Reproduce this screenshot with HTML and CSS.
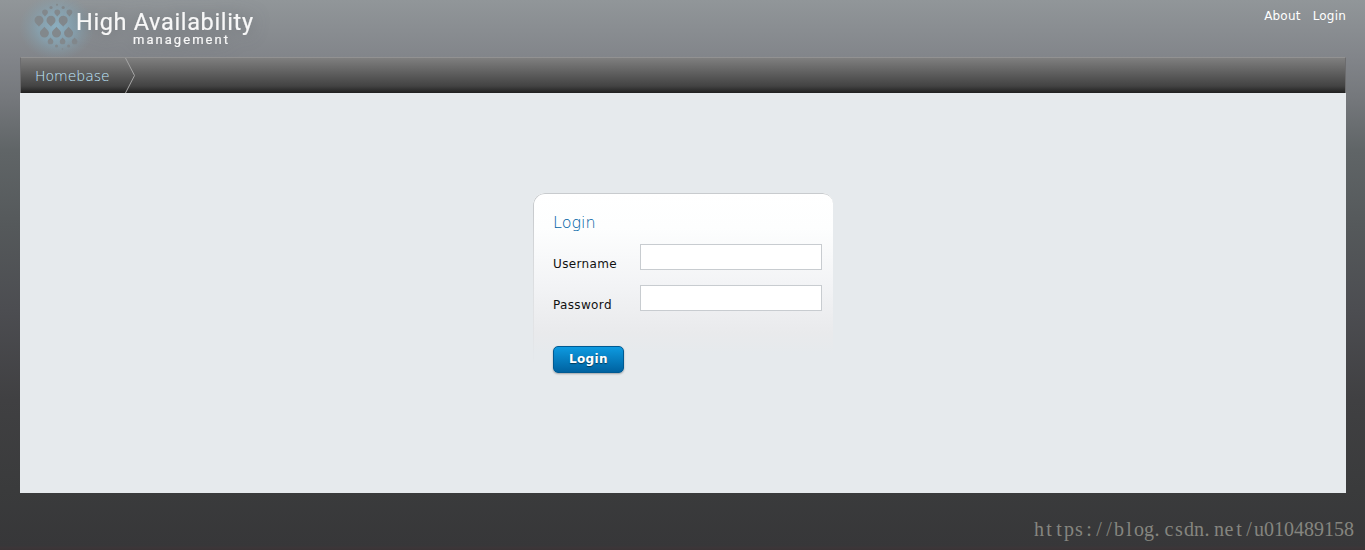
FILE: index.html
```html
<!DOCTYPE html>
<html lang="en">
<head>
    <meta charset="UTF-8">
    <title>High Availability management</title>
    <link rel="stylesheet" href="styles.css">
</head>
<body>
    <header class="header">
        <svg class="logo" width="260" height="57" viewBox="0 0 260 57">
            <defs>
                <radialGradient id="glow">
                    <stop offset="0" stop-color="#8bb0c2" stop-opacity="0.95"/>
                    <stop offset="0.5" stop-color="#86a6b6" stop-opacity="0.7"/>
                    <stop offset="1" stop-color="#849aa5" stop-opacity="0"/>
                </radialGradient>
                <path id="drop" d="M0 6C-1.5 3.8-4.5 2.6-4.5-.4A4.5 4.5 0 0 1 4.5-.4C4.5 2.6 1.5 3.8 0 6Z"/>
            </defs>
            <ellipse cx="37" cy="27" rx="38" ry="33" fill="url(#glow)"/>
            <g fill="#82888c">
                <circle cx="37" cy="4.7" r="1"/>
                <circle cx="31" cy="7.5" r="1.6"/>
                <circle cx="43.2" cy="7.5" r="1.6"/>
                <use href="#drop" transform="translate(25 12.6) scale(.65)"/>
                <use href="#drop" transform="translate(37.3 12.6) scale(.65)"/>
                <use href="#drop" transform="translate(49.4 12.6) scale(.65)"/>
                <use href="#drop" x="19" y="20.7"/>
                <use href="#drop" x="31" y="20.7"/>
                <use href="#drop" x="43.2" y="20.7"/>
                <use href="#drop" transform="translate(24.4 32.7) scale(1 -1)"/>
                <use href="#drop" transform="translate(36.5 32.7) scale(1 -1)"/>
                <use href="#drop" transform="translate(48.6 32.7) scale(1 -1)"/>
                <use href="#drop" transform="translate(30.5 41.2) scale(.63 -.63)"/>
                <use href="#drop" transform="translate(42.6 41.2) scale(.63 -.63)"/>
                <use href="#drop" transform="translate(54.6 41.2) scale(.63 -.63)"/>
                <circle cx="36.5" cy="46" r="1.5"/>
                <circle cx="48.6" cy="46" r="1.5"/>
                <circle cx="42.5" cy="49" r=".8"/>
            </g>
            <g class="logo-text">
                <text x="56" y="30" font-size="23.5" textLength="177">High Availability</text>
                <text x="113" y="44" font-size="13" textLength="95">management</text>
            </g>
        </svg>
        <nav class="links">
            <a>About</a>
            <a>Login</a>
        </nav>
    </header>

    <nav class="navbar">
        <a class="nav-item">Homebase</a>
        <svg class="nav-arrow" width="11" height="35" viewBox="0 0 11 35">
            <path d="M.5 0L9.5 17.5L.5 35" fill="none" stroke="#a6a6a6"/>
        </svg>
    </nav>

    <main class="content">
        <form class="login-box">
            <h2>Login</h2>
            <div class="row">
                <label for="username">Username</label>
                <input type="text" id="username">
            </div>
            <div class="row">
                <label for="password">Password</label>
                <input type="password" id="password">
            </div>
            <button type="button">Login</button>
        </form>
    </main>

    <footer class="footer">
        <!-- one 10px cell per character -->
        <svg class="url" width="322" height="26" viewBox="0 0 322 26">
            <text y="18" x="5 15 25 35 45 55 65 75 85 95 105 115 123 135 145 155 165 173 185 195 205 215 225 235 245 255 265 275 285 295 305 315">https://blog.csdn.net/u010489158</text>
        </svg>
    </footer>
</body>
</html>
```

FILE: styles.css
```css
* {
    box-sizing: border-box;
}
body {
    margin: 0;
    padding: 0 19px 0 20px;
    height: 550px;
    overflow: hidden;
    font-family: "DejaVu Sans", "Noto Sans", sans-serif;
    font-size: 12px;
    background: linear-gradient(#919699 0, #82858a 57px, #74777b 100px, #606567 150px, #55595b 225px, #4c4d51 310px, #404042 400px, #3a3b3c 490px, #373739 546px, #3c3639 547px, #3b3436 550px);
}
.header {
    display: flex;
    justify-content: space-between;
    height: 57px;
}
.logo {
    display: block;
}
.logo-text {
    font-family: Roboto, sans-serif;
    fill: #f7f7f7;
    stroke: #f7f7f7;
    stroke-width: 0.2px;
    filter: drop-shadow(0 0 8px rgba(80, 84, 90, 0.5));
}
.links {
    display: flex;
    gap: 12px;
    padding-top: 8px;
    letter-spacing: 0.2px;
    line-height: 16px;
    color: #fff;
}
.navbar {
    display: flex;
    height: 36px;
    padding-left: 14px;
    border: 1px solid #6c6c6e;
    border-top-color: #929292;
    border-bottom: 0;
    background: linear-gradient(#7f7f7f, #434343 80%, #202020);
}
.nav-item {
    width: 90px;
    font-size: 14px;
    font-weight: 200;
    line-height: 36px;
    color: #c0eaff;
}
.content {
    height: 400px;
    padding-top: 100px;
    background: #e6eaed;
}
.login-box {
    position: relative;
    width: 300px;
    height: 180px;
    margin-left: 513px;
    padding: 20px 11px 0 20px;
    border-radius: 12px 10px 0 0;
    background: linear-gradient(#fff 0, #fdfefe 35px, #f3f4f6 90px, #e9eaec 140px, #e6eaed 160px);
}
/* outline that fades out towards the bottom */
.login-box::before {
    content: "";
    position: absolute;
    inset: 0;
    border: 1px solid #c8cbce;
    border-width: 1px 0 0 1px;
    border-radius: 12px 10px 0 0;
    mask-image: linear-gradient(#000 20px, transparent 170px);
    pointer-events: none;
}
.login-box h2 {
    margin: 0 0 11px;
    font-size: 16px;
    font-weight: 200;
    line-height: 20px;
    color: #0062a5;
}
.row {
    display: flex;
    height: 26px;
    margin-bottom: 15px;
}
.row label {
    width: 87px;
    padding-top: 12px;
    letter-spacing: 0.35px;
    line-height: 16px;
    color: #111;
}
.row input {
    width: 182px;
    height: 26px;
    padding: 4px;
    border: 1px solid #c8ccd0;
    background: #fff;
}
.login-box button {
    display: block;
    width: 71px;
    height: 27px;
    margin-top: 35px;
    padding: 0 0 2px;
    border: 1px solid #005a92;
    border-radius: 5px;
    background: linear-gradient(#0d9ae0, #0062a0);
    box-shadow: 0 1px 2px rgba(0, 0, 0, 0.3);
    font-family: "DejaVu Sans", sans-serif;
    font-size: 12px;
    font-weight: bold;
    letter-spacing: 0.4px;
    color: #fff;
    text-shadow: 0 1px 1px rgba(0, 0, 0, 0.5);
}
.footer {
    display: flex;
    justify-content: flex-end;
    margin-right: -10px;
    padding-top: 25px;
}
.url {
    font-family: "Liberation Serif", serif;
    font-size: 20px;
    text-anchor: middle;
    fill: #85857f;
}
```
